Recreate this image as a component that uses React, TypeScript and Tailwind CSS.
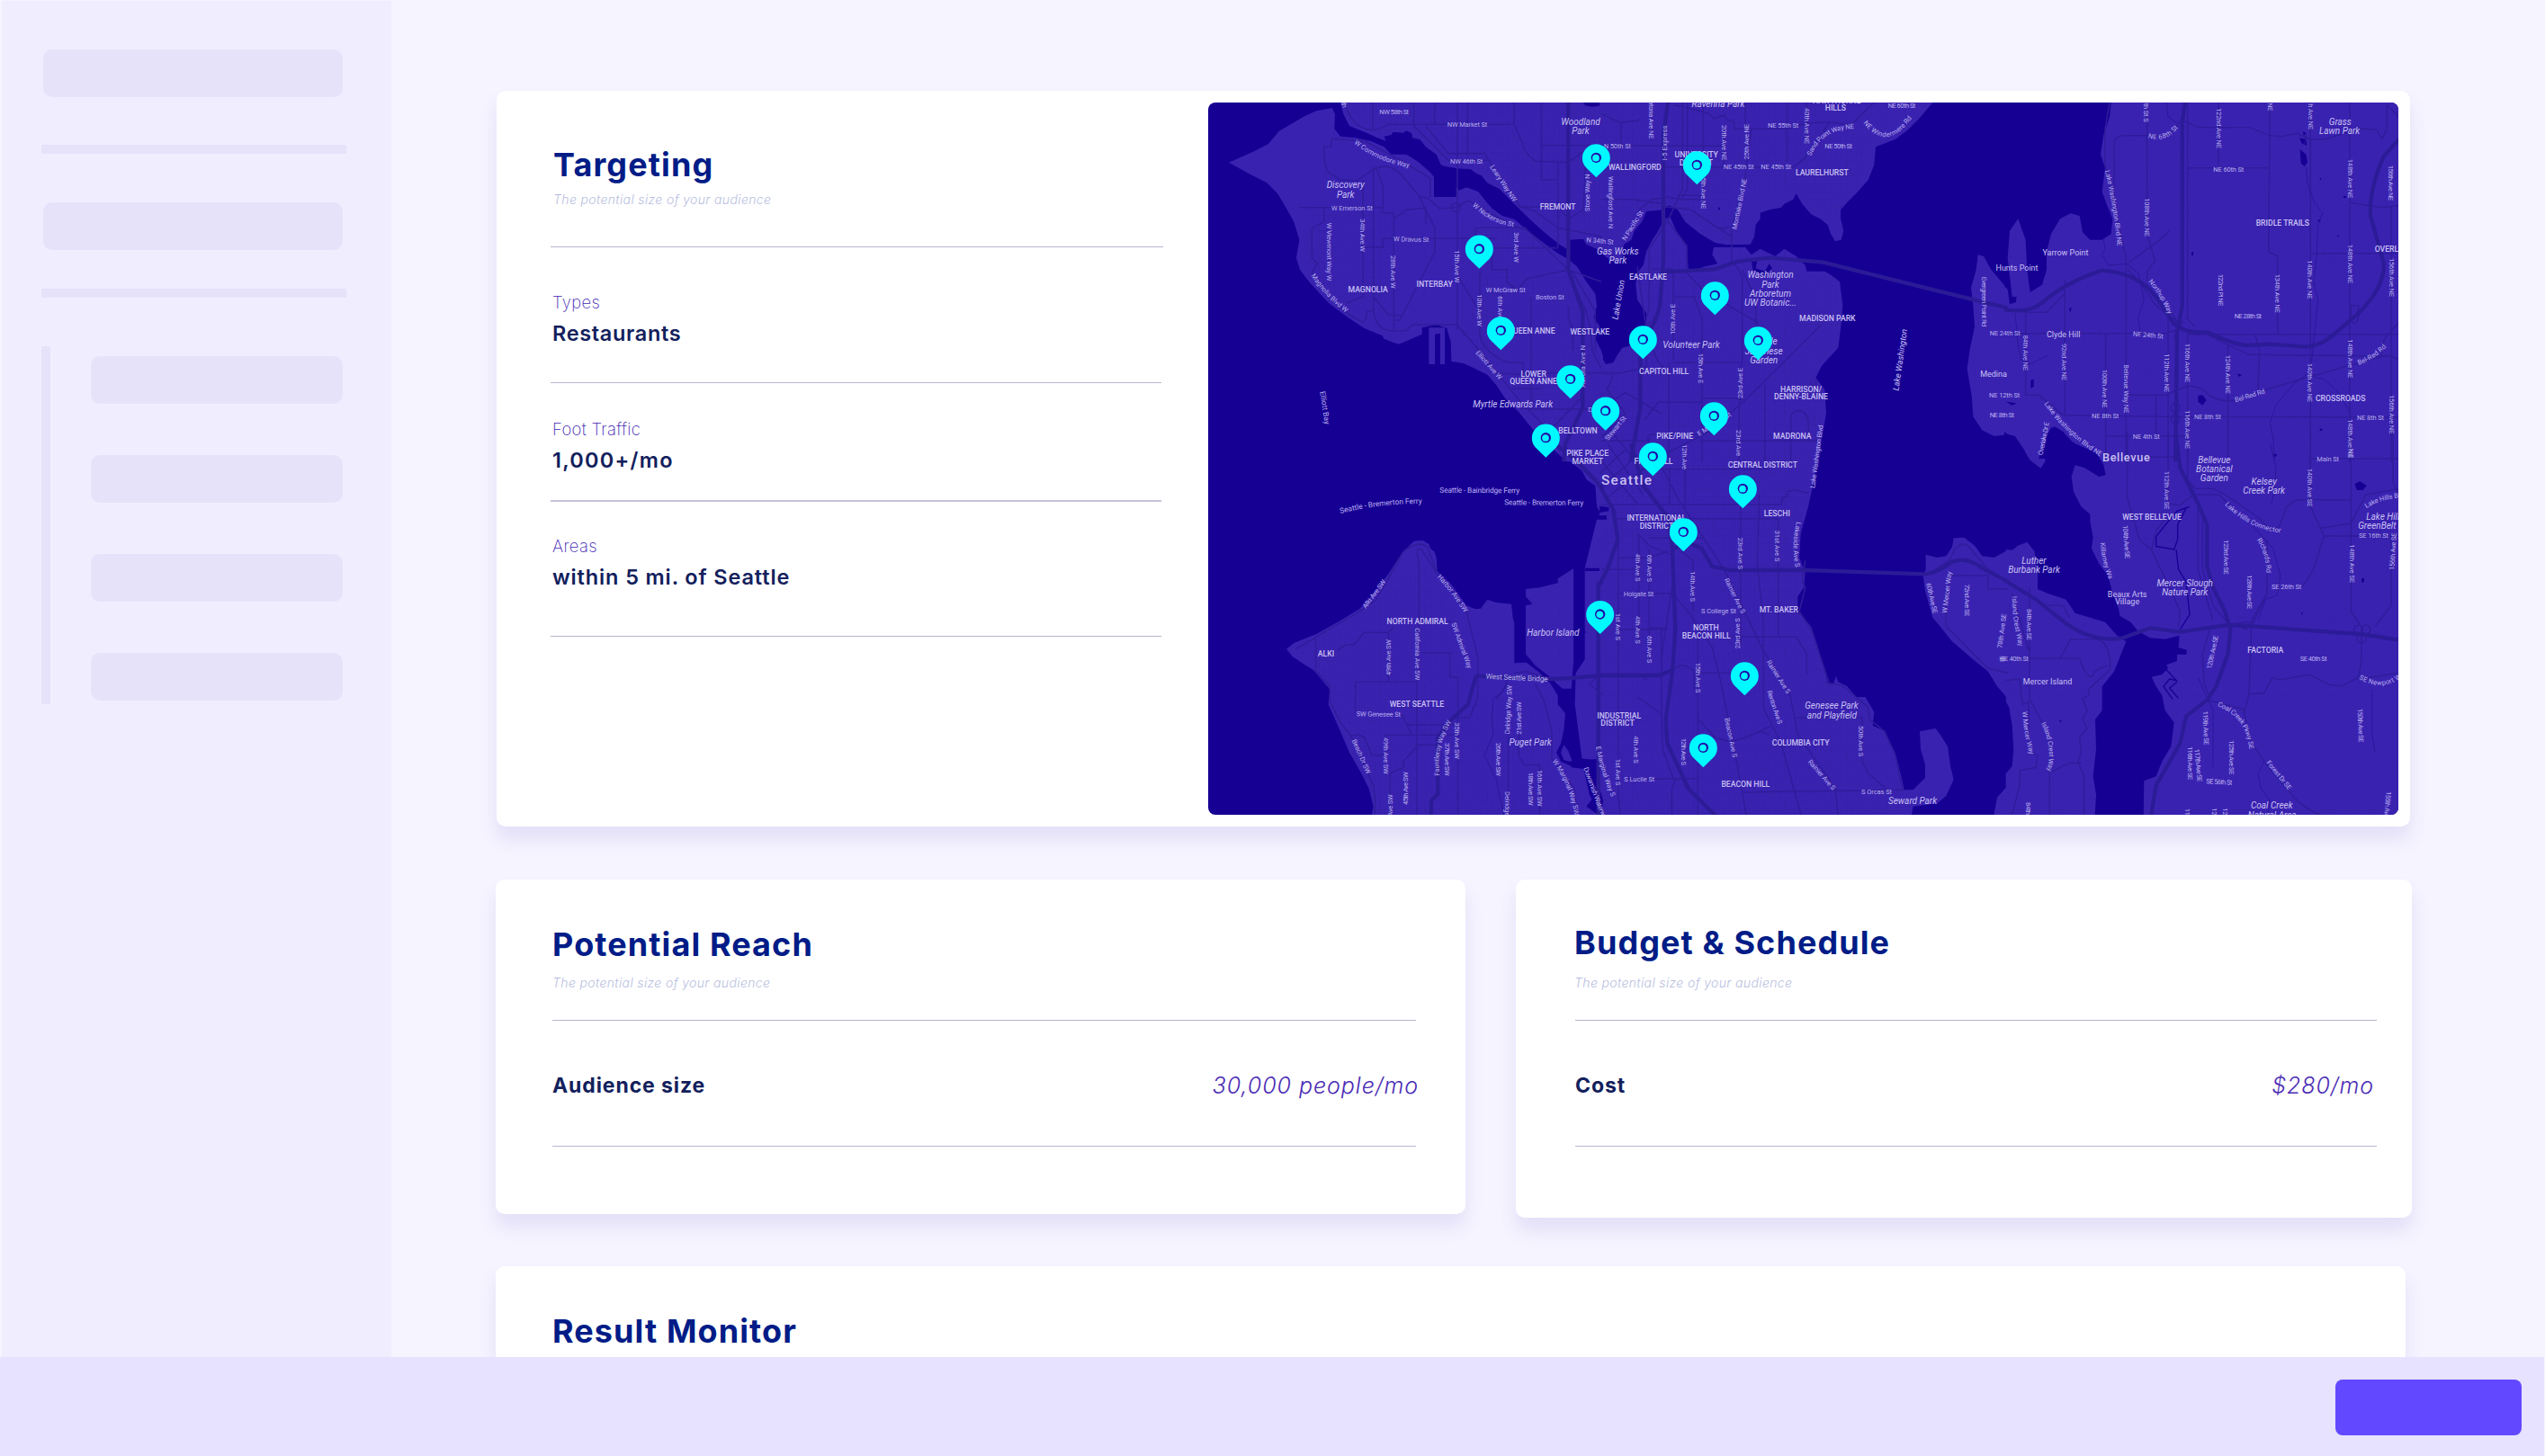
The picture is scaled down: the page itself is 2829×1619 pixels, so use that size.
type Street = [string, number, number, number, number, number?];
type Place = [string, number, number, ("n" | "p" | "t" | "c" | "b")?];

interface Section {
  id: string;
  x: number;
  y: number;
  land: string;
  water?: string;
  grid: string[];
  highways: string[];
  roads: string[];
  creeks?: string[];
  streets: Street[];
  places: Place[];
}

const sections: Section[] = [
  {
    id: "nw",
    x: -39,
    y: -42,
    land: "M108,242L192,205 240,180 275,138 360,88 400,70 452,60 462,80 460,130 480,155 530,160 580,170 625,190 650,215 700,215 740,240 780,275 792,290V357H866V325L875,335 900,325 940,340 960,365 985,395 1020,420 1060,432 1100,465 1150,505 1205,545 1240,565 1270,590 1300,640 1330,680 1335,720 1325,760 1345,790 1330,830 1350,870 1356,890V1240H1235L1180,1190 1120,1130 1075,1075 1030,1030 1000,985 970,950 930,930 890,912 850,905 848,840 835,795 820,790 800,783 752,793V815L700,838 675,848 650,840 625,830 620,820 560,795 500,755 440,710 380,645 345,600 333,560 343,500 325,440 300,395 270,345 235,310 180,282ZM480,42L490,80 510,120 560,140 600,158 632,170 625,155 650,150 655,140 690,143 700,136 718,145 720,160 745,165 765,190 800,215 815,250 830,255 870,262 915,265 935,280 950,285 970,310 1010,330 1060,380 1110,430 1160,475 1210,515 1235,530 1240,500 1290,497 1300,515 1356,540V42ZM775,793H795V915H775ZM812,812H828V915H812ZM812,812L795,818V793H828V915Z",
    water: "M1290,42H1356V52L1320,56 1296,52ZM795,815L812,812V915H795ZM790,785H812V791H790Z",
    grid: ["M500,42H1356V540L1235,530 970,310 800,215 640,140 500,100Z", "M360,395H660V800L560,790 440,700 370,620Z", "M880,450L1100,460 1240,570 1356,800V1240H1240L1090,1040 880,800Z"],
    highways: ["M1240,42V600L1288,740V1060L1230,1180 1225,1240"],
    roads: [
      "M588,42V132M500,60Q530,140 600,133L640,115H1060M725,42V120L840,235H970M765,120L840,212H960L1080,390 1130,405 1205,460 1356,490M794,42V115M870,42V800M904,42V220M1060,42V115L1100,210 1130,238 1240,242 1290,205M1150,42V185H1356M1150,185V300H1205M1205,240V530M1080,390H1205L1240,430 1290,400 1300,200",
      "M450,160V190H425Q425,260 440,275L480,300 535,302 590,265Q640,240 680,280L740,350 795,460V540L680,765M450,162L560,170 690,240 780,295V357M340,392H620V410H658V800M425,392V440L385,460V560L403,580 385,610Q440,720 555,775L565,765 570,738H590M555,300V690L500,712M590,255V740Q600,800 650,805L700,803 720,783H870L895,820 885,800M622,495H1000M622,495V525H560M658,430L700,400 765,393V450M600,265L622,320V392M740,355L770,360 810,395 870,392 885,378 910,370 960,400 1060,455 1100,465 1240,600 1350,640M930,460V500M930,460H1100M980,527H1200M870,620L945,740V820Q960,880 1040,910H1090V945H1356M945,600V740M885,800L960,890 1080,1040 1200,1160M1115,690V1060M1100,630L1240,600M1100,630L1070,670 1035,640V600H985V530M1080,1065H1356M590,690L640,750 690,752M657,768H680M1010,945L1115,952M1240,720V760L1255,800V870M1180,1135L1285,1025M1050,997H1150M850,392A14,14 0 1 0 880,392A14,14 0 1 0 850,392",
      "M1240,610L1300,740 1315,800 1320,870 1350,930M1250,600L1330,740V870",
    ],
    streets: [
      ["NW 58th St", 610, 73, 708, 73],
      ["NW Market St", 836, 116, 970, 116],
      ["NW 46th St", 846, 239, 955, 239],
      ["W Commodore Way", 530, 172, 706, 250, 12],
      ["Leary Way NW", 985, 253, 1063, 370],
      ["W Nickerson St", 925, 380, 1055, 448, 12],
      ["Stone Way N", 1303, 405, 1303, 280],
      ["W Emerson St", 450, 393, 588, 393],
      ["W Viewmont Way W", 443, 443, 443, 637],
      ["34th Ave W", 555, 430, 555, 540],
      ["28th Ave W", 656, 552, 656, 662],
      ["W Dravus St", 657, 497, 775, 499],
      ["15th Ave W", 870, 535, 870, 643],
      ["3rd Ave W", 1066, 475, 1066, 576],
      ["Magnolia Blvd W", 388, 615, 497, 733, 6],
      ["W McGraw St", 965, 667, 1097, 667],
      ["Boston St", 1131, 691, 1226, 691],
      ["10th Ave W", 945, 682, 945, 789],
      ["6th Ave W", 1014, 688, 1014, 790],
      ["Elliott Ave W", 936, 872, 1015, 962],
      ["Elliott Bay", 420, 1005, 436, 1115],
      ["Aurora Ave N", 1289, 992, 1289, 852],
      ["N 34th St", 1300, 500, 1391, 507],
      ["Denny", 1306, 1067, 1368, 1067],
      ["24th", 480, 20, 496, 58],
    ],
    places: [
      ["Woodland", 1281, 106, "p"],
      ["Park", 1281, 137, "p"],
      ["Discovery", 497, 317, "p"],
      ["Park", 497, 348, "p"],
      ["FREMONT", 1205, 391],
      ["MAGNOLIA", 572, 667],
      ["INTERBAY", 794, 647],
      ["QUEEN ANNE", 1117, 805],
      ["WESTLAKE", 1312, 807],
      ["LOWER", 1124, 947],
      ["QUEEN ANNE", 1124, 973],
      ["Myrtle Edwards Park", 1055, 1048, "p"],
      ["BELLTOWN", 1272, 1138],
    ],
  },
  {
    id: "nc",
    x: 1311,
    y: -42,
    land: "M-6,42H1105L1060,95 1020,135 980,165 915,190 910,250 890,300 850,345 820,375 798,400V430L808,470 800,500 780,505 765,480 755,450 730,430 700,415 670,380 650,345 640,365 610,380 600,392 560,400 530,410 530,430 515,450 510,490 497,515 420,517 380,510 330,480 280,440 255,400 240,392 225,385 205,400 150,405 135,440 110,470 100,500 75,515 70,560 50,578 20,560 -6,540ZM210,430L190,470 170,500 150,540 140,585 120,610 115,650 120,700 150,745V790L130,830 110,850 70,860 50,890 40,910 15,915 0,890 -6,890V1240H715L735,1160 750,1080 745,1000 715,960 735,920 790,860 800,780 805,720 795,640 770,620 745,605H685L680,585 650,555 610,530 580,555 530,530 500,550 480,525H375L370,550 388,580 340,590 305,605 290,595 285,520 250,470 230,425ZM1256,550L1275,555 1300,600 1356,665V1150L1310,1155 1270,1135 1240,1090 1235,1020 1220,930 1230,860 1245,790 1240,720 1233,660 1250,600Z",
    water: "M390,392H396V400H390ZM275,850L290,855 285,866 277,862ZM500,560L520,570 515,595 545,605 560,580 570,595 545,620 505,600Z",
    grid: ["M-6,42H1000L900,180 850,340 780,430 640,340 500,340 440,240V510L330,480 240,390 130,400 70,540H-6Z", "M210,480L285,620H440V880H560L680,600H800L790,860 720,960 740,1080 715,1240H-6V920L150,830 130,650Z"],
    highways: [
      "M222,42L207,150V570L195,720Q185,770 150,820L130,880V1060L98,1240",
      "M212,608L380,598 450,573 560,560 740,575 900,615 1100,665 1356,728",
    ],
    roads: [
      "M270,42V330L225,430 160,530V730L150,760M287,42V330L265,370M340,42V390M245,50L310,65 360,80 375,95 410,85 420,100 440,103 445,130H500M440,130H620L680,112 760,107 830,117 850,100 910,42M480,42V120M500,130L480,290 435,460V575M408,130V257H640Q670,240 690,210L760,110M0,187H410M0,257H640M620,42V240M685,42V180M0,365H100L215,380M120,405L170,365 220,357 270,365 330,365M255,352H340M215,390L300,400 380,455 435,490M215,430L285,520V610L340,670 520,775V800M445,580L470,620V900L460,960V1240M240,600V900M165,598H240M240,690H310L335,760V1240M732,785L480,1035 360,1140 200,1220M0,945H60L130,930 150,925V880M240,910H460M145,1100L190,1042H335V1028H450L475,1035M545,980V1240M0,1170H160V1150H330M330,1170H720M632,1240V1090Q635,1070 660,1070Q690,1075 690,1110V1170M515,780V700L480,620 470,600M0,80L65,110 130,100M65,110V187M120,590L150,800 185,900 210,930M165,770L100,840",
      "M40,950L20,1000 80,1080 0,1160M0,1100L110,1230M0,1060L80,1010 200,1080M225,910V1240M700,970V1000L720,970M430,455Q400,470 370,450",
    ],
    streets: [
      ["Latona Ave NE", 166, 25, 166, 163],
      ["I-5 Express", 211, 235, 211, 118],
      ["20th Ave NE", 409, 117, 409, 235],
      ["25th Ave NE", 485, 232, 485, 114],
      ["NE 55th St", 555, 118, 658, 118],
      ["40th Ave NE", 686, 60, 686, 180],
      ["Sand Point Way NE", 692, 218, 828, 122, -26],
      ["NE 60th St", 956, 51, 1048, 51],
      ["NE Windermere Rd", 880, 105, 1014, 108, 42],
      ["N 50th St", 8, 187, 99, 187],
      ["NE 50th St", 745, 187, 837, 187],
      ["NE 45th St", 407, 257, 509, 257],
      ["NE 45th St", 532, 257, 634, 257],
      ["Wallingford Ave N", 31, 288, 31, 462],
      ["15th Ave NE", 340, 280, 340, 397],
      ["Montlake Blvd NE", 443, 465, 478, 296],
      ["N Pacific St", 74, 500, 134, 405],
      ["10th Ave E", 237, 816, 237, 714],
      ["15th Ave E", 332, 878, 332, 979],
      ["23rd Ave E", 462, 1029, 462, 927],
      ["Stewart St", 16, 1166, 78, 1090],
      ["E Madison St", 322, 1148, 430, 1080],
      ["12th Ave", 278, 1182, 278, 1266],
      ["23rd Ave", 458, 1134, 458, 1222],
      ["Lake Washington Blvd", 704, 1328, 732, 1118],
      ["Evergreen Point Rd", 1277, 623, 1277, 790],
      ["NE 24th St", 1295, 811, 1397, 811],
      ["NE 12th St", 1293, 1017, 1396, 1017],
      ["NE 8th St", 1295, 1085, 1377, 1085],
    ],
    places: [
      ["Ravenna Park", 390, 46, "p"],
      ["HAWTHORNE", 785, 36],
      ["HILLS", 781, 61],
      ["UNIVERSITY", 317, 216],
      ["DISTRICT", 316, 242],
      ["WALLINGFORD", 112, 257],
      ["LAURELHURST", 736, 277],
      ["Gas Works", 55, 538, "p"],
      ["Park", 55, 569, "p"],
      ["EASTLAKE", 156, 625],
      ["Washington", 564, 617, "p"],
      ["Park", 564, 648, "p"],
      ["Arboretum", 564, 679, "p"],
      ["UW Botanic...", 564, 709, "p"],
      ["MADISON PARK", 754, 761],
      ["Volunteer Park", 300, 849, "p"],
      ["Seattle", 542, 839, "p"],
      ["Japanese", 542, 870, "p"],
      ["Garden", 542, 900, "p"],
      ["CAPITOL HILL", 209, 939],
      ["HARRISON/", 666, 998],
      ["DENNY-BLAINE", 666, 1024],
      ["PIKE/PINE", 245, 1156],
      ["MADRONA", 637, 1154],
    ],
  },
  {
    id: "ne",
    x: 2661,
    y: -42,
    land: "M-1,42H1310V1240H-1Z",
    water:
      "M-6,42H350L345,90 325,150 315,215 330,260 320,340 335,380 355,430 350,480 320,500 280,500 255,475 245,420 215,412 180,430 150,480 135,540V600L120,650 80,675 70,600 65,500 40,430 12,470 5,560 20,690 35,690 33,708 12,715 5,665 -6,655ZM-6,1145L30,1155 60,1200 80,1240H-6ZM105,1240L135,1150 160,1122 190,1140 230,1185 290,1222 320,1240ZM980,198L1000,215 1005,240 995,255 983,245ZM978,160L1000,165 1003,185 985,178ZM990,138L1002,145 992,152ZM640,1020L655,1018 668,1035 655,1052 640,1040ZM82,968L92,965V990L82,995ZM210,728L218,726 214,745ZM0,1040L35,1045 20,1052ZM772,945L786,952 775,957ZM1103,485H1109V489H1103ZM1040,432H1048V440H1040ZM1125,354H1135V360H1125ZM1045,295L1052,293 1048,302ZM618,540H624V552H618ZM1046,1130H1054V1137H1046ZM888,1214H902V1220H888Z",
    grid: [],
    highways: [
      "M-6,733Q80,745 120,710Q200,640 320,602Q440,610 500,690L560,780Q600,815 670,808Q760,850 800,852L880,848 1000,857Q1060,850 1100,810L1180,740Q1260,660 1260,580L1215,420Q1210,330 1260,220L1310,165",
      "M597,42L587,110V720L570,810 565,1240",
    ],
    roads: [
      "M345,42L330,130V250L400,560 400,1240M360,400V180Q362,152 392,152H540L585,100 640,125H810L880,152 920,155 970,145 1015,165 1060,165 1180,130 1235,133 1255,162 1270,130V50L1310,90M605,260H880M880,42L875,540 905,555V815M1015,42V1240M1146,42V1240M1015,545H1310M1284,390V1240M1146,375L1250,392 1310,385M470,42V480L497,570 470,605V640M410,575L500,510 545,470M195,635V1085L540,1090 1310,1092M0,812H530L570,800M540,760V1240M332,812V1240M605,42V760M605,815H1310M605,800V1240M670,815L740,850 810,883 1280,888 1310,900M740,850V1240M575,1000Q630,970 680,1020Q740,1055 800,1020L1000,960 1250,890 1262,830 1310,775M830,815L845,870 840,1000M65,740V1018H110L190,1085M65,742H135L195,680M400,1018H530L560,1005M332,1155H600M708,42V250M405,600Q450,640 500,720L580,780M600,760L630,790M500,1018V1155M550,740L575,780 560,830 590,770M550,1060A14,14 0 1 0 580,1060A14,14 0 1 0 550,1060M550,1098A14,14 0 1 0 580,1098A14,14 0 1 0 550,1098M1150,720H1175V760Q1160,800 1150,760Z",
    ],
    creeks: [
      "M1000,150L995,180M1000,255L1005,310 1030,380 1055,410 1040,450 1035,560 1025,640 1040,700 1030,800 1015,940 960,980 900,1050 880,1110 890,1160 895,1240M535,42L540,90 570,110M325,500L330,530 320,550 340,585 400,580 440,610 460,700 440,760 450,830M30,745L40,850 50,900 80,915 140,885",
      "M1015,955L1060,965 1100,1000 1120,1030 1150,1080",
    ],
    streets: [
      ["th St S", 468, 44, 468, 107],
      ["NE 68th St", 474, 152, 560, 130, 14],
      ["122nd Ave NE", 709, 60, 709, 195],
      ["NE 60th St", 691, 265, 793, 265],
      ["Ave NE", 881, 6, 881, 70],
      ["h Ave NE", 1016, 46, 1016, 132],
      ["148th Ave NE", 1147, 230, 1147, 361],
      ["156th Ave NE", 1282, 251, 1282, 369],
      ["Lake Washington Blvd NE", 338, 268, 378, 512, -4],
      ["108th Ave NE", 469, 361, 469, 489],
      ["148th Ave NE", 1149, 515, 1149, 645],
      ["156th Ave NE", 1286, 561, 1286, 690],
      ["140th Ave NE", 1012, 568, 1012, 697],
      ["134th Ave NE", 904, 614, 904, 743],
      ["122nd Pl NE", 715, 614, 715, 721],
      ["Northup Way", 480, 635, 545, 738, -5],
      ["NE 28th St", 761, 754, 852, 754],
      ["NE 24th St", 423, 813, 524, 822],
      ["84th Ave NE", 65, 818, 65, 936],
      ["92nd Ave NE", 194, 846, 194, 969],
      ["112th Ave NE", 537, 880, 537, 1008],
      ["116th Ave NE", 604, 845, 604, 975],
      ["124th Ave NE", 740, 884, 740, 1013],
      ["148th Ave NE", 1147, 832, 1147, 961],
      ["Bel-Red Rd", 1172, 910, 1258, 856, 6],
      ["100th Ave NE", 330, 932, 330, 1060],
      ["Bellevue Way NE", 401, 916, 401, 1078],
      ["140th Ave NE", 1012, 911, 1012, 1041],
      ["Bel-Red Rd", 763, 1034, 862, 1004],
      ["156th Ave NE", 1286, 1017, 1286, 1147],
      ["Lake Washington Blvd NE", 133, 1042, 306, 1208, 12],
      ["NE 8th St", 285, 1087, 376, 1087],
      ["NE 8th St", 627, 1089, 717, 1089],
      ["NE 8th St", 1170, 1094, 1260, 1094],
      ["116th Ave NE", 605, 1068, 605, 1197],
      ["148th Ave NE", 1149, 1098, 1149, 1227],
      ["Overlake Dr E", 114, 1218, 136, 1108],
      ["NE 4th St", 422, 1155, 512, 1155],
    ],
    places: [
      ["Grass", 1114, 106, "p"],
      ["Lawn Park", 1112, 137, "p"],
      ["BRIDLE TRAILS", 922, 445],
      ["OVERLAKE", 1293, 531],
      ["Yarrow Point", 198, 543, "t"],
      ["Hunts Point", 36, 595, "t"],
      ["Clyde Hill", 191, 816, "t"],
      ["Medina", -42, 947, "t"],
      ["CROSSROADS", 1115, 1028],
    ],
  },
  {
    id: "sw",
    x: -39,
    y: 1158,
    land: "M300,665L325,645 400,615 480,570 545,530 590,480 640,415 685,345 725,305 755,303 775,315 780,330 793,340 800,360 803,405 850,450 900,520 930,532 948,530 970,500 1000,510 1050,515 1055,560 1060,580V712L1100,710 1140,740 1180,780 1205,820 1205,850 1230,880 1225,935 1215,980 1200,1010 1215,1040 1260,1060 1290,1060 1310,1150 1356,1240H580L590,1190 575,1130 550,1080 510,1010 480,940 440,850 445,800 420,770 390,735 350,710 320,690ZM1098,465L1145,460 1205,445V430L1257,397V710L1250,797H1220L1180,760 1130,720 1098,682V520L1120,515 1098,490ZM1335,233L1295,395V600L1300,615 1330,635 1295,610V700L1265,745 1262,850 1275,950 1285,1030 1320,1035 1356,1080V233ZM1215,15L1285,70 1300,100 1330,120 1335,190 1356,230V-60H1150ZM1225,985L1215,1010 1225,1035 1255,1045 1240,1005Z",
    water: "M1295,395H1356V405H1295ZM1300,1190L1320,1165 1356,1200V1230ZM1240,1040L1356,1030V1045L1290,1065 1250,1060Z",
    grid: ["M540,560L740,380 860,520 920,750 860,900V1240H600L480,940 400,720 330,665Z", "M940,820H1180V1240H860V900Z"],
    highways: ["M932,755L970,757 1180,765 1250,762 1356,752", "M932,755L905,850 850,900 805,960V1150L783,1170V1240", "M1340,440V1240", "M1195,-20L1270,40 1356,130"],
    roads: [
      "M735,340Q740,320 755,340L800,410 850,470 900,540 920,620 938,690V830L910,895H850M735,340L742,380V560L735,780V1240M398,730V625L560,530 600,500 690,340Q740,300 770,325L800,405M330,665L400,625M470,670L500,650 525,650 560,610H640L660,590M640,610V775M530,878V775H735M750,678H845V760H872V1240M685,885L718,950M630,975V952H870M705,918H870M515,955L540,950 560,960 585,1020H625M800,985H740L690,1040V1060L645,1080V1240M395,735L445,790V840L480,910 515,955 590,1120 597,1180 590,1240M1040,950V1240M1130,780L1160,840 1185,940V1030L1260,1130 1270,1240M1040,790V945M1075,950V1025L1095,1052H1145V1240M1060,745L1100,740 1180,765M1340,755L1310,780 1356,820M1340,460L1356,440M850,575L840,570M1040,780L1000,830",
    ],
    creeks: ["M1040,760L1020,810 990,830 985,900 990,950 960,1020 1000,1100 1010,1150 1030,1240"],
    streets: [
      ["Seattle - Bremerton Ferry", 478, 205, 739, 172, -8],
      ["Seattle - Bainbridge Ferry", 811, 135, 1078, 137],
      ["Seattle - Bremerton Ferry", 1027, 176, 1291, 178],
      ["Alki Ave SW", 558, 526, 626, 436],
      ["Harbor Ave SW", 808, 420, 897, 536, -4],
      ["49th Ave SW", 640, 753, 640, 633],
      ["California Ave SW", 736, 595, 736, 769],
      ["SW Admiral Way", 857, 578, 912, 728],
      ["West Seattle Bridge", 965, 756, 1172, 766],
      ["SW Genesee St", 533, 881, 681, 883],
      ["Delridge Way SW", 1036, 948, 1044, 786],
      ["21st Ave SW", 1074, 950, 1074, 841],
      ["Fauntleroy Way SW", 803, 1088, 846, 900, -18],
      ["35th Ave SW", 869, 910, 869, 1032],
      ["37th Ave SW", 835, 978, 835, 1088],
      ["49th Ave SW", 631, 960, 631, 1082],
      ["Beach Dr SW", 525, 967, 575, 1080],
      ["26th Ave SW", 1006, 978, 1006, 1089],
      ["16th Ave SW", 1144, 1068, 1144, 1190],
      ["18th Ave SW", 1114, 1076, 1114, 1187],
      ["45th Ave SW", 697, 1185, 697, 1075],
      ["49th Ave SW", 646, 1270, 646, 1150],
      ["Delridge Way", 1038, 1140, 1038, 1270],
      ["W Marginal Way SW", 1193, 1035, 1266, 1203, -10],
      ["Duwamish Waterway", 1298, 1060, 1365, 1240],
      ["E Marginal Way S", 1340, 990, 1394, 1163, 5],
    ],
    places: [
      ["PIKE PLACE", 1304, 13],
      ["MARKET", 1304, 39],
      ["NORTH ADMIRAL", 737, 574],
      ["ALKI", 432, 682],
      ["Harbor Island", 1189, 611, "p"],
      ["WEST SEATTLE", 735, 848],
      ["Puget Park", 1113, 975, "p"],
    ],
  },
  {
    id: "sc",
    x: 1311,
    y: 1158,
    land: "M-6,-60H728V0L710,100 690,190 665,280 660,360 680,410 675,460 655,490V540L700,590 720,650 740,720 755,778 775,780 783,755 790,775 820,790 850,825H880L910,875 905,920 945,940 980,1010 1000,1090 1010,1135H1040L1080,1095V1050L1065,1000 1062,940 1115,930 1130,950 1155,990 1165,1060 1175,1100 1150,1155 1120,1180 1040,1190 1030,1240H-6ZM1082,350L1120,360 1150,355 1170,325 1175,295 1210,293 1245,320 1270,355 1310,360 1356,335V830L1320,790 1290,740 1240,700 1170,640 1130,590 1105,560 1080,470 1073,420 1082,400ZM1356,1120L1320,1160 1305,1240H1356Z",
    water: "M-6,188L25,192V205L-6,210ZM-6,220H18V233H-6ZM-6,1130L6,1170 0,1218H-6Z",
    grid: ["M-6,-60H720L650,460 700,600 760,780 860,830 920,940 1000,1130 960,1218H-6Z"],
    highways: [
      "M98,-20L140,120 225,230 237,330 247,600 237,740 215,900 220,980 290,1130 400,1240",
      "M235,330L300,315 335,330 370,390 430,402H680L1080,415Q1120,410 1160,380Q1210,350 1270,395L1356,440",
      "M-6,120L40,200 55,300 20,400 -6,450",
      "M-6,753H190L240,735",
    ],
    roads: [
      "M150,-40L260,170 410,400 540,670V860L600,980 672,1240M540,670L630,820 655,950 780,1130 792,1240M245,490L290,540 370,660 400,780 460,1090 487,1240M0,183H600L605,160 620,155 620,140 645,135 690,145M40,230H590V400M125,280V640M160,330V700M57,300V1150L65,1240M280,-20V200M322,600V1240M465,170V650M527,150L520,380 540,570V660M270,340L305,370V540M60,600H220M0,400H120M590,400V620M430,625H650L685,680V750M330,745H430M230,740Q270,700 310,740V800M325,900L380,960 430,975 480,960 530,940 560,950M525,940L565,922M645,895H870V1040L890,1080 960,1140M470,1143L600,1140 850,1138 1010,1135M680,370L670,440 680,460 660,540 700,600 740,720 760,780 800,785 850,825 890,860 895,900 945,940 980,1020 1005,1135M80,1098H320M228,60V180M120,65H228L250,65H560M60,360H160L220,340M60,480H230L247,500M120,825L200,880M125,750L155,770M200,600V880L205,1000 240,1100M1090,415L1160,370 1180,330 1200,315 1220,318 1290,400M1155,420H1290V465H1356M1150,470V590L1200,640 1290,730 1356,745M160,295H340M130,290L160,320 230,350M250,1095L235,1130V1218M160,595H220M240,430L200,700",
      "M-6,30L120,180M20,-20L140,150M-6,130L120,20M20,160L160,50M-6,80L80,0",
    ],
    streets: [
      ["4th Ave S", 123, 347, 123, 439],
      ["6th Ave S", 162, 350, 162, 441],
      ["Holgate St", 74, 482, 175, 482],
      ["1st Ave S", 57, 545, 57, 636],
      ["4th Ave S", 123, 555, 123, 647],
      ["6th Ave S", 162, 621, 162, 712],
      ["14th Ave S", 305, 405, 305, 507],
      ["Rainier Ave S", 417, 430, 474, 545],
      ["23rd Ave S", 464, 293, 464, 399],
      ["31st Ave S", 586, 269, 586, 373],
      ["Lakeside Ave S", 659, 242, 655, 390, 8],
      ["S College St", 333, 539, 450, 539],
      ["23rd Ave S", 453, 664, 453, 562],
      ["15th Ave S", 322, 710, 322, 811],
      ["Rainier Ave S", 557, 704, 625, 811],
      ["Renton Ave S", 560, 804, 597, 915],
      ["Beacon Ave S", 419, 895, 446, 1026],
      ["50th Ave S", 867, 921, 867, 1024],
      ["12th Ave S", 274, 962, 274, 1053],
      ["4th Ave S", 117, 955, 117, 1046],
      ["1st Ave S", 57, 1031, 57, 1120],
      ["S Lucile St", 76, 1099, 178, 1099],
      ["Rainier Ave S", 694, 1037, 777, 1132],
      ["S Orcas St", 867, 1141, 969, 1141],
      ["60th Ave SE", 1091, 445, 1114, 546],
      ["W Mercer Way", 1144, 545, 1160, 406],
      ["72nd Ave SE", 1219, 449, 1219, 556],
      ["78th Ave SE", 1328, 662, 1343, 548],
      ["SE", 1337, 708, 1337, 688],
    ],
    places: [
      ["Seattle", 86, 100, "c"],
      ["FIRST HILL", 174, 39],
      ["CENTRAL DISTRICT", 538, 52],
      ["LESCHI", 586, 212],
      ["INTERNATIONAL", 184, 228],
      ["DISTRICT", 184, 254],
      ["MT. BAKER", 592, 535],
      ["NORTH", 349, 594],
      ["BEACON HILL", 350, 620],
      ["INDUSTRIAL", 59, 887],
      ["DISTRICT", 54, 913],
      ["Genesee Park", 768, 854, "p"],
      ["and Playfield", 769, 885, "p"],
      ["COLUMBIA CITY", 665, 977],
      ["BEACON HILL", 481, 1115],
      ["Seward Park", 1038, 1172, "p"],
    ],
  },
  {
    id: "se",
    x: 2661,
    y: 1158,
    land: "M-1,30H1310V1218H-1Z",
    water:
      "M-6,-60L50,-10 80,35 115,62 130,40V-30L150,-75 230,-20 300,10 325,50 332,85 310,90 260,60 230,52 218,90 225,140 250,190 280,215V240L290,290 285,330 310,380 340,420 355,480 375,530 380,555 415,575 440,605 480,628 530,632 578,620 575,660 602,668V683H570V705L535,718 540,730 520,750 485,758 500,790 520,820 530,870 560,910 550,990 520,1040 500,1090 460,1105 458,1240H295L300,1150 290,1090 300,1000 297,900 320,870V790L360,740 380,690 400,640 370,620 330,575 280,560 230,545 200,500 140,480 105,465V410L95,340 70,308 40,320 20,335 -6,332ZM-6,830L10,860 20,920 25,1000 20,1055 0,1080H-6ZM1162,115L1180,105 1202,120 1190,135 1170,135ZM888,15L902,20 895,26ZM1185,430L1194,428V440L1186,445ZM983,545L990,542 986,552ZM178,903H184V908H178Z",
    grid: [],
    highways: [
      "M565,-60L580,60 640,180 670,250V390L690,460 730,540 748,600 740,680 700,790 670,835 600,890 580,980 500,1120 480,1240",
      "M-6,435L100,500 200,580Q290,645 390,628L480,595 580,608 740,585 830,590 1180,615 1310,635",
    ],
    roads: [
      "M605,-60V100L630,130H690L730,150 840,225 880,268 910,258 935,190 970,167H1150M404,-60V160L445,300 485,335 550,470 580,540 575,590M540,-60V180L580,185 625,150H710L750,190M485,335L500,270 540,220M1015,-60V190L1060,288 1025,400 990,455M1060,288H1310M1150,-60V540L1185,590V700L1175,760 1120,788 1080,785 1010,750 960,760 910,768 888,760 860,812 810,815M865,490L818,590 810,815 795,875M870,300V480L818,570M1290,-60V110L1310,150M1284,290V520L1230,590M0,697H245Q265,760 285,758Q300,725 340,722M345,735L275,800V820L255,830 270,870 255,900 270,930 245,960 250,1010 240,1040 260,1090V1240M180,697L215,632H300Q350,640 347,735M78,460V830L145,960V1240M20,480L75,670M670,835L790,865 820,980 860,1040 960,1160Q1000,1200 1050,1218M680,600L655,680 660,780 680,830M640,180V400L690,570M0,770L45,765 55,850 75,840V1000L105,1020 100,1060 45,1070V1120L20,1218M1050,262L1150,245 1200,150 1310,130M332,25H560M1015,30H1310M150,1075L210,1045H250M655,200V400L690,520 740,580M760,580L820,575 800,600ZM140,520H190L210,560M1160,600A14,14 0 1 0 1190,600A14,14 0 1 0 1160,600M1185,600A14,14 0 1 0 1215,600A14,14 0 1 0 1185,600M1170,630A14,14 0 1 0 1200,630A14,14 0 1 0 1170,630M1175,765L1310,745",
    ],
    creeks: [
      "M880,-20L900,60 895,130 885,180M820,250L890,330 915,420 905,485 865,500 840,570M640,760L690,870 690,1060M860,1040L840,1080 850,1130 880,1170 870,1240M1220,800V950L1230,1010",
    ],
    streets: [
      ["Main St", 1036, 31, 1110, 31],
      ["NE", 1150, -4, 1150, 28],
      ["112th Ave SE", 537, 71, 537, 199],
      ["140th Ave SE", 1014, 62, 1014, 190],
      ["Lake Hills Connector", 735, 178, 906, 268, 16],
      ["Lake Hills Blvd", 1197, 188, 1335, 152, -10],
      ["104th Ave SE", 397, 252, 405, 363],
      ["123rd Ave SE", 735, 301, 735, 416],
      ["Richards Rd", 843, 297, 876, 405, -8],
      ["148th Ave SE", 1153, 316, 1153, 444],
      ["SE 16th St", 1176, 287, 1275, 287],
      ["156th Ave SE", 1286, 402, 1294, 278],
      ["Killarney Way", 322, 310, 346, 418, 4],
      ["128th Ave SE", 811, 418, 811, 531],
      ["SE 26th St", 885, 457, 985, 457],
      ["Island Crest Way", 28, 489, 50, 650, 5],
      ["84th Ave SE", 78, 531, 78, 635],
      ["120th Ave SE", 676, 731, 700, 620],
      ["SE 40th St", -18, 698, 75, 698],
      ["SE 40th St", 980, 698, 1070, 698],
      ["SE Newport Way", 1180, 757, 1325, 745, 26],
      ["Coal Creek Pkwy SE", 707, 848, 816, 978, -24],
      ["119th Ave SE", 664, 872, 668, 985],
      ["150th Ave SE", 1180, 864, 1184, 976],
      ["W Mercer Way", 63, 873, 84, 1006, 4],
      ["Island Crest Way", 124, 910, 146, 1064, -14],
      ["125th Ave SE", 753, 969, 753, 1084],
      ["117th Ave SE", 636, 998, 646, 1108],
      ["116th Ave SE", 615, 990, 615, 1101],
      ["SE 56th St", 667, 1106, 754, 1110],
      ["Forest Dr SE", 873, 1040, 947, 1131],
      ["84th Ave SE", 75, 1176, 75, 1285],
      ["118th", 605, 1196, 605, 1250],
      ["123rd", 696, 1195, 696, 1250],
      ["124th", 730, 1195, 730, 1250],
      ["155th Ave SE", 1276, 1140, 1266, 1255],
    ],
    places: [
      ["Bellevue", 401, 26, "b"],
      ["Bellevue", 694, 33, "p"],
      ["Botanical", 694, 63, "p"],
      ["Garden", 694, 94, "p"],
      ["Kelsey", 860, 105, "p"],
      ["Creek Park", 860, 136, "p"],
      ["WEST BELLEVUE", 486, 225],
      ["Lake Hills", 1264, 223, "p"],
      ["GreenBelt Park", 1270, 254, "p"],
      ["Luther", 93, 370, "p"],
      ["Burbank Park", 93, 401, "p"],
      ["Mercer Slough", 596, 445, "p"],
      ["Nature Park", 596, 475, "p"],
      ["Beaux Arts", 404, 482, "t"],
      ["Village", 404, 508, "t"],
      ["FACTORIA", 865, 670],
      ["Mercer Island", 138, 773, "t"],
      ["Coal Creek", 886, 1187, "p"],
      ["Natural Area", 887, 1218, "p"],
    ],
  },
];

const pins = [
  [1294, 184], [904, 488], [976, 760], [1208, 922], [1126, 1118],
  [1325, 1028], [1630, 208], [1690, 643], [1450, 790], [1834, 793],
  [1687, 1045], [1483, 1180], [1783, 1288], [1585, 1432], [1307, 1707],
  [1789, 1912], [1651, 2152],
];

const placeClass = {
  n: "text-[26px] font-medium",
  p: "text-[30px] italic",
  t: "text-[27px]",
  c: "text-[46px] font-medium tracking-[4px]",
  b: "text-[38px] font-medium tracking-[2px]",
};

// Ferry lines, the bridge and the bay are set larger than ordinary streets.
const isMajor = (name: string) => /Ferry|Bridge|Bay$/.test(name);

function StreetLabel({ street, id }: { street: Street; id: string }) {
  const [name, x1, y1, x2, y2, bend] = street;
  const mx = (x1 + x2) / 2;
  const my = (y1 + y2) / 2;
  const length = Math.hypot(x2 - x1, y2 - y1);
  const size = isMajor(name) ? "text-[25px]" : "text-[22.5px]";
  if (bend) {
    // The control point lies off the chord, clockwise of it for a positive bend.
    const nx = (-(y2 - y1) / length) * bend * 2;
    const ny = ((x2 - x1) / length) * bend * 2;
    // The path runs on past the label's end so that no letter is dropped.
    const ex = x2 + (x2 - (mx + nx)) * 0.3;
    const ey = y2 + (y2 - (my + ny)) * 0.3;
    return (
      <>
        <path id={id} d={`M${x1},${y1}Q${mx + nx},${my + ny} ${x2},${y2}L${ex},${ey}`} fill="none" />
        <text dy="8" className={size}>
          <textPath href={`#${id}`}>{name}</textPath>
        </text>
      </>
    );
  }
  const angle = (Math.atan2(y2 - y1, x2 - x1) * 180) / Math.PI;
  return (
    <text
      className={size}
      textAnchor="middle"
      dy="8"
      textLength={length}
      transform={`translate(${mx} ${my}) rotate(${angle})`}
    >
      {name}
    </text>
  );
}

function SeattleMap() {
  return (
    <svg viewBox="0 0 3969 2376" className="block h-[792px] w-[1323px] shrink-0 rounded-lg bg-[#160094]" fontFamily="Roboto, sans-serif">
      <defs>
        <pattern id="blocks" width="34" height="52" patternUnits="userSpaceOnUse">
          <path d="M1,0V52M17,0V26M0,1H34M0,27H34" stroke="#3420a3" strokeWidth="2" fill="none" />
        </pattern>
        <pattern id="suburb" width="150" height="130" patternUnits="userSpaceOnUse">
          <path d="M10,0V40H50V70M90,20Q120,30 110,60T140,90M20,100Q50,80 70,110V130M60,10H90V40M120,100V125H150" stroke="#3520a6" strokeWidth="2" fill="none" />
        </pattern>
      </defs>
      {sections.map((s) => (
        <g key={s.id} transform={`translate(${s.x} ${s.y})`}>
          <path d={s.land} fill="#3a22b1" />
          <clipPath id={`land-${s.id}`}>
            <path d={s.land} />
          </clipPath>
          <g clipPath={`url(#land-${s.id})`}>
            <path d={s.land} fill="url(#suburb)" />
            {s.grid.map((d) => (
              <path key={d} d={d} fill="url(#blocks)" />
            ))}
          </g>
          {s.water && <path d={s.water} fill="#160094" />}
        </g>
      ))}
      <g transform="translate(2661 1158)" fill="none" stroke="#160094" strokeWidth="4">
        <path d="M612,190L570,205 540,240 500,290V322L560,333 572,300V250L600,195M567,333L575,400 600,440 612,550 580,600M535,735L568,770 545,765 525,790 555,832M575,830L545,795 570,775" />
      </g>
      {sections.map((s) => (
        <g key={s.id} transform={`translate(${s.x} ${s.y})`} fill="none" strokeLinejoin="round">
          {s.roads.map((d) => (
            <path key={d} d={d} stroke="#2f1c9b" strokeWidth="4.5" />
          ))}
          {s.creeks?.map((d) => (
            <path key={d} d={d} stroke="#2a1799" strokeWidth="3" />
          ))}
          {s.highways.map((d) => (
            <path key={d} d={d} stroke="#2c1b97" strokeWidth="13" />
          ))}
        </g>
      ))}
      {sections.map((s) => (
        <g key={s.id} transform={`translate(${s.x} ${s.y})`} fill="#b9aeee">
          {s.streets.map((street, i) => (
            <StreetLabel key={i} street={street} id={`${s.id}-street-${i}`} />
          ))}
        </g>
      ))}
      {sections.map((s) => (
        <g key={s.id} transform={`translate(${s.x} ${s.y})`} fill="#c9c0f3" textAnchor="middle">
          {s.places.map(([name, x, y, kind = "n"], i) => (
            <text key={i} x={x} y={y} dy="0.35em" className={placeClass[kind]}>
              {name}
            </text>
          ))}
          {s.id === "nc" && (
            <>
              <text transform="translate(57 700) rotate(-80)" dy="0.35em" className="text-[28px] italic">Lake Union</text>
              <text transform="translate(996 900) rotate(-82)" dy="0.35em" className="text-[28px] italic">Lake Washington</text>
            </>
          )}
        </g>
      ))}
      {pins.map(([x, y]) => (
        <g key={`${x}-${y}`} transform={`translate(${x} ${y})`}>
          <path d="M0,66L-34,33A46.5,46.5 0 1 1 34,33Z" fill="#00f9ff" />
          <circle r="17" fill="#2209a8" />
          <circle cx="-1" cy="1" r="11.5" fill="#00f9ff" />
        </g>
      ))}
    </svg>
  );
}

function Detail({ label, value, spacing = "tracking-[0.8px]" }: { label: string; value: string; spacing?: string }) {
  return (
    <>
      <dt className="text-[18.5px] leading-6 font-extralight tracking-[0.3px] text-[#4326b3]">{label}</dt>
      <dd className={`mt-[7px] text-[23.5px] leading-8 font-semibold text-[#12205c] ${spacing}`}>{value}</dd>
    </>
  );
}

const title = "text-[36px] leading-10 font-bold text-[#001c87] tracking-[1.1px]";
const caption = "text-[14px] leading-5 italic font-light text-[#b8bedf] tracking-[0.37px]";
const card = "rounded-[10px] bg-white shadow-[0_14px_20px_rgba(90,70,190,0.12)]";
const strong = "text-[23px] leading-8 font-bold tracking-[0.9px] text-[#12205c]";
const amount = "text-[25px] leading-8 font-light italic tracking-[0.95px] text-[#4a2bb5]";

export default function App() {
  return (
    <div className="flex h-[1619px] w-[2829px] flex-col overflow-hidden bg-[#f6f4ff] font-['Inter',sans-serif]">
      <div className="flex min-h-0 flex-1">
        <aside className="mt-px ml-0.5 w-[433px] shrink-0 bg-[#f0edff] pt-[54px] pl-[44px]">
          <div className="ml-0.5 h-[53px] w-[333px] rounded-[10px] bg-[#e6e2fa]" />
          <div className="mt-[53px] h-2.5 w-[339px] bg-[#e6e2fa]" />
          <div className="mt-[54px] ml-0.5 h-[53px] w-[333px] rounded-[10px] bg-[#e6e2fa]" />
          <div className="mt-[43px] h-2.5 w-[339px] bg-[#e6e2fa]" />
          <div className="mt-[54px] flex h-[398px] gap-[45px]">
            <div className="w-2.5 bg-[#e6e2fa]" />
            <div className="flex flex-col gap-[57px] pt-[11px]">
              {[0, 1, 2, 3].map((i) => (
                <div key={i} className="h-[53px] w-[280px] rounded-[10px] bg-[#e6e2fa]" />
              ))}
            </div>
          </div>
        </aside>
        <main className="pt-[101px] pl-[116px]">
          <section className={`ml-px flex h-[818px] w-[2127px] justify-between pr-[13px] pt-[13px] ${card}`}>
            <div className="pt-[49px] pl-[60px]">
              <h2 className={`ml-[3px] ${title}`}>Targeting</h2>
              <p className={`mt-[9px] ml-[3px] ${caption}`}>The potential size of your audience</p>
              <div className="mt-[42px] w-[681px] border-t border-[#b9b6d0]" />
              <dl className="mt-[49px] ml-[2px]"><Detail label="Types" value="Restaurants" spacing="tracking-[0.65px]" /></dl>
              <div className="mt-[38px] w-[679px] border-t border-[#b9b6d0]" />
              <dl className="mt-[39px] ml-[2px]"><Detail label="Foot Traffic" value="1,000+/mo" spacing="tracking-[1.25px]" /></dl>
              <div className="mt-[28px] w-[679px] border-t-2 border-[#c4c2d8]" />
              <dl className="mt-[37px] ml-[2px]"><Detail label="Areas" value="within 5 mi. of Seattle" spacing="tracking-[0.87px]" /></dl>
              <div className="mt-[49px] w-[679px] border-t border-[#b9b6d0]" />
            </div>
            <SeattleMap />
          </section>
          <div className="mt-[59px] flex items-start gap-14">
            <section className={`h-[372px] w-[1078px] pt-[52px] pl-[63px] ${card}`}>
              <h2 className={title}>Potential Reach</h2>
              <p className={`mt-[13px] ${caption}`}>The potential size of your audience</p>
              <div className="mt-[31px] flex h-[141px] w-[960px] items-center justify-between border-y border-[#b9b6d0] pt-1">
                <span className={strong}>Audience size</span>
                <span className={`-mr-[3px] ${amount}`}>30,000 people/mo</span>
              </div>
            </section>
            <section className={`h-[376px] w-[996px] pt-[50px] pl-[66px] ${card}`}>
              <h2 className={`-ml-px ${title}`}>Budget &amp; Schedule</h2>
              <p className={`mt-[15px] -ml-px ${caption}`}>The potential size of your audience</p>
              <div className="mt-[31px] flex h-[141px] w-[891px] items-center justify-between border-y border-[#b9b6d0] pt-1 pr-[3px]">
                <span className={strong}>Cost</span>
                <span className={amount}>$280/mo</span>
              </div>
            </section>
          </div>
          <section className={`mt-[54px] h-[300px] w-[2123px] pt-[52px] pl-[63px] ${card}`}>
            <h2 className={title}>Result Monitor</h2>
          </section>
        </main>
      </div>
      <footer className="relative z-10 mr-px flex h-[110px] shrink-0 items-center justify-end bg-[#e6e2ff] pt-[6px] pr-[25px] pb-[4px]">
        <button className="h-[62px] w-[207px] rounded-lg bg-[#6248ff]" aria-label="Continue" />
      </footer>
    </div>
  );
}
